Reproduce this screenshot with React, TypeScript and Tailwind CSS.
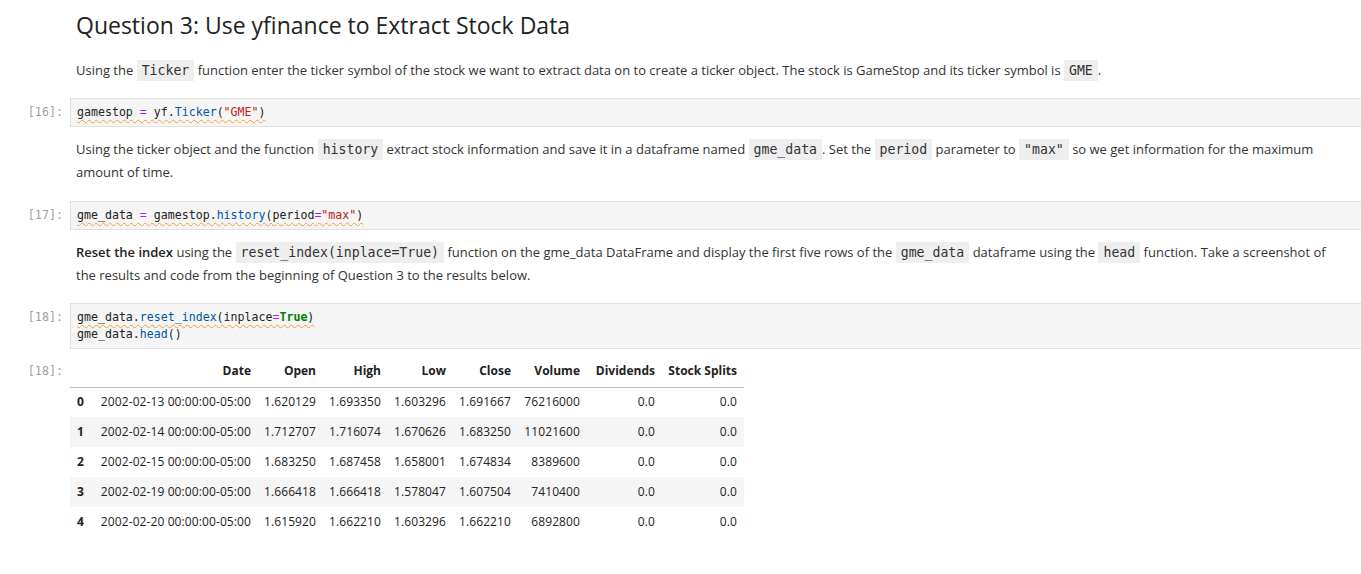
const SANS = "font-['Open_Sans','Noto_Sans',sans-serif]";
const MONO = "font-['DejaVu_Sans_Mono','Liberation_Mono',monospace]";

const Code = ({ children }: { children: React.ReactNode }) => (
  <code className={`${MONO} bg-[#eeeeee] px-[5px] py-[3px] text-[13.2px] leading-none text-[#333]`}>{children}</code>
);

const Prompt = ({ n }: { n: number }) => (
  <div className={`${MONO} w-[70px] shrink-0 pr-[7px] text-right text-[11.7px] text-[#a0a0a0]`}>[{n}]:</div>
);

const Eq = () => <span className="text-[#aa22ff]">=</span>;
const Fn = ({ children }: { children: React.ReactNode }) => <span className="text-[#0055aa]">{children}</span>;
const Str = ({ children }: { children: React.ReactNode }) => <span className="text-[#ba2121]">{children}</span>;

const squiggle = "underline decoration-wavy decoration-[#f0a040] decoration-1 underline-offset-[3px]";

const CodeCell = ({ n, children }: { n: number; children: React.ReactNode }) => (
  <div className="flex items-start">
    <div className="pt-[6px]">
      <Prompt n={n} />
    </div>
    <div className={`${MONO} flex-1 border border-[#e0e0e0] bg-[#f5f5f5] px-[6px] py-[5px] text-[11.6px] leading-[17px] text-[#222] -mr-[20px]`}>
      {children}
    </div>
  </div>
);

const Markdown = ({ children, className = "" }: { children: React.ReactNode; className?: string }) => (
  <div className={`pl-[76px] ${SANS} text-[13px] leading-[23px] text-[#333] ${className}`}>{children}</div>
);

const ROWS = [
  ["0", "2002-02-13 00:00:00-05:00", "1.620129", "1.693350", "1.603296", "1.691667", "76216000", "0.0", "0.0"],
  ["1", "2002-02-14 00:00:00-05:00", "1.712707", "1.716074", "1.670626", "1.683250", "11021600", "0.0", "0.0"],
  ["2", "2002-02-15 00:00:00-05:00", "1.683250", "1.687458", "1.658001", "1.674834", "8389600", "0.0", "0.0"],
  ["3", "2002-02-19 00:00:00-05:00", "1.666418", "1.666418", "1.578047", "1.607504", "7410400", "0.0", "0.0"],
  ["4", "2002-02-20 00:00:00-05:00", "1.615920", "1.662210", "1.603296", "1.662210", "6892800", "0.0", "0.0"],
];

const COLS = ["Date", "Open", "High", "Low", "Close", "Volume", "Dividends", "Stock Splits"];
const WIDTHS = ["w-[20px]", "w-[168px]", "w-[65px]", "w-[65px]", "w-[65px]", "w-[65px]", "w-[69px]", "w-[75px]", "w-[82px]"];

export default function App() {
  return (
    <div className="min-h-[574px] w-[1361px] overflow-hidden bg-white">
      <h2 className={`${SANS} pl-[76px] pt-[9px] text-[23px] leading-[32px] text-[#222]`}>
        Question 3: Use yfinance to Extract Stock Data
      </h2>

      <Markdown className="mt-[18px] whitespace-nowrap">
        Using the <Code>Ticker</Code> function enter the ticker symbol of the stock we want to extract data on to create a ticker
        object. The stock is GameStop and its ticker symbol is <Code>GME</Code>.
      </Markdown>

      <div className="mt-[16px]">
        <CodeCell n={16}>
          <span className={squiggle}>
            gamestop <Eq /> yf.<Fn>Ticker</Fn>(<Str>"GME"</Str>)
          </span>
        </CodeCell>
      </div>

      <Markdown className="mt-[11px] whitespace-nowrap">
        Using the ticker object and the function <Code>history</Code> extract stock information and save it in a dataframe named{" "}
        <Code>gme_data</Code>. Set the <Code>period</Code> parameter to <Code>"max"</Code> so we get information for the maximum
        <br />
        amount of time.
      </Markdown>

      <div className="mt-[17px]">
        <CodeCell n={17}>
          <span className={squiggle}>
            gme_data <Eq /> gamestop.<Fn>history</Fn>(period<Eq />
            <Str>"max"</Str>)
          </span>
        </CodeCell>
      </div>

      <Markdown className="mt-[11px] whitespace-nowrap">
        <b className="font-semibold text-[#222]">Reset the index</b> using the <Code>reset_index(inplace=True)</Code> function on the
        gme_data DataFrame and display the first five rows of the <Code>gme_data</Code> dataframe using the <Code>head</Code> function.
        Take a screenshot of
        <br />
        the results and code from the beginning of Question 3 to the results below.
      </Markdown>

      <div className="mt-[16px]">
        <CodeCell n={18}>
          <div>
            <span className={squiggle}>
              gme_data.<Fn>reset_index</Fn>(inplace<Eq />
              <span className="font-bold text-[#008000]">True</span>)
            </span>
          </div>
          <div>
            gme_data.<Fn>head</Fn>()
          </div>
        </CodeCell>
      </div>

      <div className="mt-[7px] flex items-start">
        <div className="pt-[7px]">
          <Prompt n={18} />
        </div>
        <table className={`${SANS} table-fixed border-collapse text-[12px] text-[#222]`}>
          <thead>
            <tr className="border-b border-[#bdbdbd]">
              <th className={`${WIDTHS[0]} h-[31px]`}></th>
              {COLS.map((c, i) => (
                <th key={c} className={`${WIDTHS[i + 1]} pr-[7px] text-right font-bold`}>
                  {c}
                </th>
              ))}
            </tr>
          </thead>
          <tbody>
            {ROWS.map((r, ri) => (
              <tr key={ri} className={`h-[30px] ${ri % 2 === 1 ? "bg-[#f5f5f5]" : ""}`}>
                <td className="pl-[7px] text-left font-bold">{r[0]}</td>
                {r.slice(1).map((v, i) => (
                  <td key={i} className="pr-[7px] text-right whitespace-nowrap tracking-[0.1px]">
                    {v}
                  </td>
                ))}
              </tr>
            ))}
          </tbody>
        </table>
      </div>
    </div>
  );
}
